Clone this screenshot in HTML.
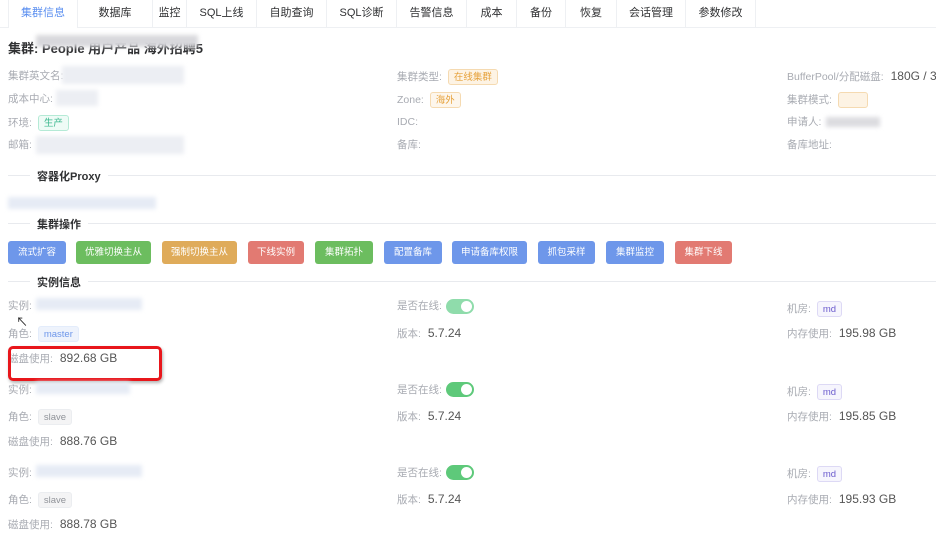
<!DOCTYPE html><html><head><meta charset="utf-8"><style>
*{margin:0;padding:0;box-sizing:border-box}
body{width:936px;height:528px;overflow:hidden;background:#fff;font-family:"Liberation Sans","Noto Sans CJK SC",sans-serif;position:relative;color:#606266}
.a{position:absolute;white-space:nowrap}
.tab{position:absolute;top:0;height:27px;line-height:27px;text-align:center;font-size:11px;color:#303133;border-right:1px solid #eef0f3}
.l{position:absolute;font-size:10.5px;color:#a8abb2;white-space:nowrap;line-height:15px}
.v{color:#555;font-size:12px;margin-left:4px}
.tag{display:inline-block;font-size:9.5px;padding:0 5px;height:16px;line-height:15px;border-radius:3px;border:1px solid;vertical-align:middle;margin-left:3px}
.blur{position:absolute;background:#eceef3;filter:blur(2px)}
.btn{position:absolute;top:241px;height:23px;line-height:23px;color:#fff;font-size:9.5px;text-align:center;border-radius:3px}
.bl{background:#6e97ea}.gr{background:#6cbd5f}.or{background:#dfab5a}.rd{background:#e27a72}
.div{position:absolute;left:8px;right:0;height:1px;background:#e8eaee}
.dt{position:absolute;left:30px;background:#fff;padding:0 7px;font-size:11px;font-weight:bold;color:#303133}
.sw{position:absolute;width:28px;height:15px;border-radius:8px;background:#5ec97a}
.sw::after{content:"";position:absolute;right:2px;top:2px;width:11px;height:11px;border-radius:50%;background:#fff}
</style></head><body>
<div style="position:absolute;left:0;right:0;top:27px;height:1px;background:#eef0f3"></div>
<div class="tab" style="left:8px;width:70px;color:#5b8ff0;border-left:1px solid #eef0f3;background:#fff;height:28px">集群信息</div>
<div class="tab" style="left:78px;width:75px">数据库</div>
<div class="tab" style="left:153px;width:34px">监控</div>
<div class="tab" style="left:187px;width:70px">SQL上线</div>
<div class="tab" style="left:257px;width:70px">自助查询</div>
<div class="tab" style="left:327px;width:70px">SQL诊断</div>
<div class="tab" style="left:397px;width:70px">告警信息</div>
<div class="tab" style="left:467px;width:50px">成本</div>
<div class="tab" style="left:517px;width:49px">备份</div>
<div class="tab" style="left:566px;width:51px">恢复</div>
<div class="tab" style="left:617px;width:69px">会话管理</div>
<div class="tab" style="left:686px;width:70px">参数修改</div>

<div class="a" style="left:8px;top:38px;font-size:13px;font-weight:bold;color:#303133">集群: People 用户产品 海外招聘5</div>
<div class="blur" style="left:36px;top:35px;width:162px;height:12px;background:#d8d8dc"></div>

<div class="l" style="left:8px;top:69px">集群英文名:</div><div class="blur" style="left:62px;top:66px;width:122px;height:18px"></div>
<div class="l" style="left:8px;top:92px">成本中心:</div><div class="blur" style="left:56px;top:90px;width:42px;height:16px"></div>
<div class="l" style="left:8px;top:115px">环境: <span class="tag" style="color:#3cb88f;border-color:#b5ead6;background:#eefbf6">生产</span></div>
<div class="l" style="left:8px;top:138px">邮箱:</div><div class="blur" style="left:36px;top:136px;width:148px;height:18px"></div>

<div class="l" style="left:397px;top:69px">集群类型: <span class="tag" style="color:#e6a23c;border-color:#f5dab1;background:#fdf3e4;width:50px">在线集群</span></div>
<div class="l" style="left:397px;top:92px">Zone: <span class="tag" style="color:#e6a23c;border-color:#f5dab1;background:#fdf6ec">海外</span></div>
<div class="l" style="left:397px;top:115px">IDC:</div>
<div class="l" style="left:397px;top:138px">备库:</div>

<div class="l" style="left:787px;top:69px">BufferPool/分配磁盘: <span class="v">180G / 360G</span></div>
<div class="l" style="left:787px;top:92px">集群模式: <span class="tag" style="color:#e6a23c;border-color:#f5dab1;background:#fdf3e4;width:30px">&nbsp;</span></div>
<div class="l" style="left:787px;top:115px">申请人:</div><div class="blur" style="left:826px;top:117px;width:54px;height:10px;background:#dcdce0"></div>
<div class="l" style="left:787px;top:138px">备库地址:</div>

<div class="div" style="top:175px"></div><div class="dt" style="top:168px">容器化Proxy</div>
<div class="blur" style="left:8px;top:197px;width:148px;height:12px;background:#e6ebf5"></div>
<div class="div" style="top:223px"></div><div class="dt" style="top:216px">集群操作</div>

<div class="btn bl" style="left:8px;width:58px">流式扩容</div>
<div class="btn gr" style="left:76px;width:75px">优雅切换主从</div>
<div class="btn or" style="left:162px;width:75px">强制切换主从</div>
<div class="btn rd" style="left:248px;width:56px">下线实例</div>
<div class="btn gr" style="left:315px;width:58px">集群拓扑</div>
<div class="btn bl" style="left:384px;width:58px">配置备库</div>
<div class="btn bl" style="left:452px;width:75px">申请备库权限</div>
<div class="btn bl" style="left:538px;width:57px">抓包采样</div>
<div class="btn bl" style="left:606px;width:58px">集群监控</div>
<div class="btn rd" style="left:675px;width:57px">集群下线</div>

<div class="div" style="top:281px"></div><div class="dt" style="top:274px">实例信息</div>

<div class="l" style="left:8px;top:299px">实例:</div><div class="blur" style="left:36px;top:298px;width:106px;height:12px;background:#e6ebf5"></div>
<div class="l" style="left:8px;top:326px">角色: <span class="tag" style="color:#6e97ea;border-color:#e3ecfb;background:#eef3fc">master</span></div>
<div class="l" style="left:8px;top:351px">磁盘使用: <span class="v">892.68 GB</span></div>
<div class="l" style="left:397px;top:299px">是否在线:</div><div class="sw" style="left:446px;top:299px;background:#8fdcab"></div>
<div class="l" style="left:397px;top:326px">版本: <span class="v">5.7.24</span></div>
<div class="l" style="left:787px;top:301px">机房: <span class="tag" style="color:#6a5acd;border-color:#ddd9f5;background:#f6f5fd">md</span></div>
<div class="l" style="left:787px;top:326px">内存使用: <span class="v">195.98 GB</span></div>
<div style="position:absolute;left:8px;top:346px;width:154px;height:35px;border:3px solid #e8161b;border-radius:5px;box-shadow:1px 2px 3px rgba(0,0,0,.3)"></div>
<div class="a" style="left:16px;top:313px;font-size:12px;color:#222">&#x2196;</div>

<div class="l" style="left:8px;top:383px">实例:</div><div class="blur" style="left:36px;top:382px;width:94px;height:12px;background:#e6ebf5"></div>
<div class="l" style="left:8px;top:409px">角色: <span class="tag" style="color:#909399;border-color:#ebedf0;background:#f4f4f5">slave</span></div>
<div class="l" style="left:8px;top:434px">磁盘使用: <span class="v">888.76 GB</span></div>
<div class="l" style="left:397px;top:383px">是否在线:</div><div class="sw" style="left:446px;top:382px"></div>
<div class="l" style="left:397px;top:409px">版本: <span class="v">5.7.24</span></div>
<div class="l" style="left:787px;top:384px">机房: <span class="tag" style="color:#6a5acd;border-color:#ddd9f5;background:#f6f5fd">md</span></div>
<div class="l" style="left:787px;top:409px">内存使用: <span class="v">195.85 GB</span></div>

<div class="l" style="left:8px;top:466px">实例:</div><div class="blur" style="left:36px;top:465px;width:106px;height:12px;background:#e6ebf5"></div>
<div class="l" style="left:8px;top:492px">角色: <span class="tag" style="color:#909399;border-color:#ebedf0;background:#f4f4f5">slave</span></div>
<div class="l" style="left:8px;top:517px">磁盘使用: <span class="v">888.78 GB</span></div>
<div class="l" style="left:397px;top:466px">是否在线:</div><div class="sw" style="left:446px;top:465px"></div>
<div class="l" style="left:397px;top:492px">版本: <span class="v">5.7.24</span></div>
<div class="l" style="left:787px;top:466px">机房: <span class="tag" style="color:#6a5acd;border-color:#ddd9f5;background:#f6f5fd">md</span></div>
<div class="l" style="left:787px;top:492px">内存使用: <span class="v">195.93 GB</span></div>
</body></html>
